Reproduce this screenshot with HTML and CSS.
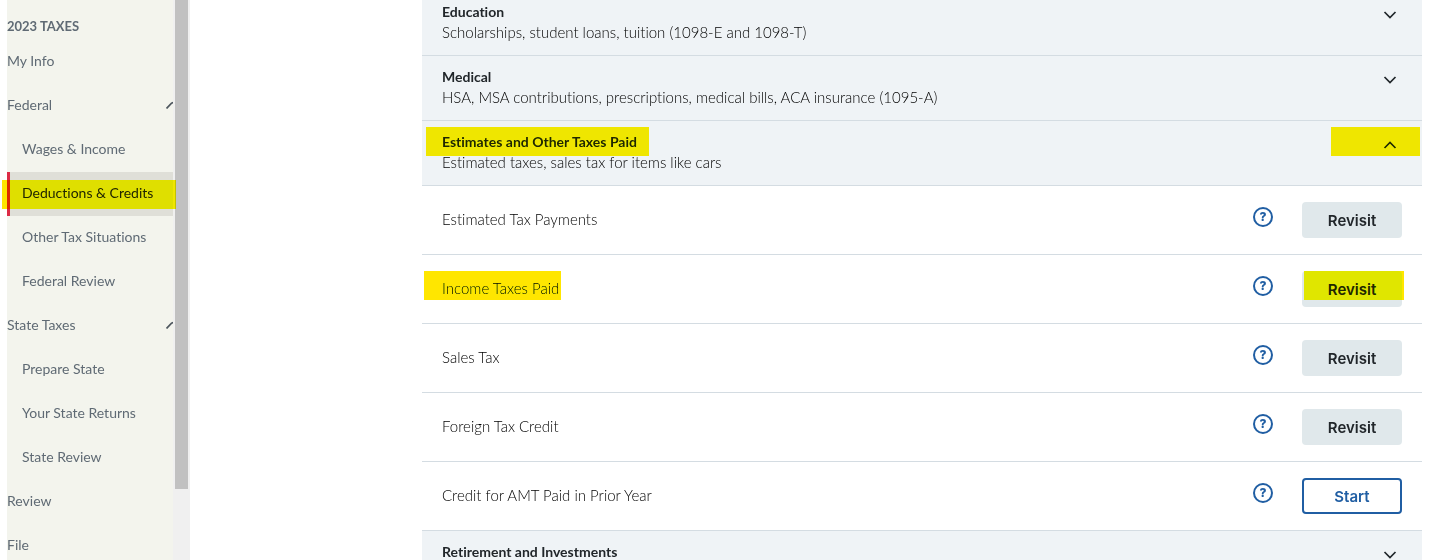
FILE: index.html
```
<!DOCTYPE html>
<html lang="en">
<head>
    <meta charset="UTF-8">
    <meta name="viewport" content="width=device-width, initial-scale=1.0">
    <title>Deductions &amp; Credits</title>
    <link rel="stylesheet" href="styles.css">
</head>
<body>

<!-- Left side - navigation -->
<aside class="sidebar">
    <nav class="side-nav">
        <h2>2023 TAXES</h2>
        <a href="#">My Info</a>
        <a href="#">Federal
            <svg class="nav-arrow" width="7" height="8" viewBox="0 0 7 8"><path d="M0.5 7.5L5.5 2.2L7.5 1.5"/></svg>
        </a>
        <a href="#" class="sub">Wages &amp; Income</a>
        <a href="#" class="sub active mark">Deductions &amp; Credits</a>
        <a href="#" class="sub">Other Tax Situations</a>
        <a href="#" class="sub">Federal Review</a>
        <a href="#">State Taxes
            <svg class="nav-arrow" width="7" height="8" viewBox="0 0 7 8"><path d="M0.5 7.5L5.5 2.2L7.5 1.5"/></svg>
        </a>
        <a href="#" class="sub">Prepare State</a>
        <a href="#" class="sub">Your State Returns</a>
        <a href="#" class="sub">State Review</a>
        <a href="#">Review</a>
        <a href="#">File</a>
    </nav>
    <div class="scrollbar"><div class="thumb"></div></div>
</aside>

<!-- Right side - deduction categories -->
<main class="content">
    <button class="category" aria-expanded="false">
        <span class="category-text">
            <strong>Education</strong>
            <span>Scholarships, student loans, tuition (1098-E and 1098-T)</span>
        </span>
        <span class="chevron"><svg width="24" height="24" viewBox="0 0 24 24"><path d="M6.5 10L12 15.5L17.5 10"/></svg></span>
    </button>
    <button class="category" aria-expanded="false">
        <span class="category-text">
            <strong>Medical</strong>
            <span>HSA, MSA contributions, prescriptions, medical bills, ACA insurance (1095-A)</span>
        </span>
        <span class="chevron"><svg width="24" height="24" viewBox="0 0 24 24"><path d="M6.5 10L12 15.5L17.5 10"/></svg></span>
    </button>
    <button class="category" aria-expanded="true">
        <span class="category-text">
            <strong class="mark mark-title">Estimates and Other Taxes Paid</strong>
            <span>Estimated taxes, sales tax for items like cars</span>
        </span>
        <span class="chevron mark mark-chevron"><svg width="24" height="24" viewBox="0 0 24 24"><path d="M6.5 16L12 10.5L17.5 16"/></svg></span>
    </button>

    <div class="item">
        <span class="item-name">Estimated Tax Payments</span>
        <button class="help" aria-label="Help with Estimated Tax Payments">?</button>
        <button class="btn">Revisit</button>
    </div>
    <div class="item">
        <span class="item-name mark mark-item">Income Taxes Paid</span>
        <button class="help" aria-label="Help with Income Taxes Paid">?</button>
        <button class="btn mark mark-btn">Revisit</button>
    </div>
    <div class="item">
        <span class="item-name">Sales Tax</span>
        <button class="help" aria-label="Help with Sales Tax">?</button>
        <button class="btn">Revisit</button>
    </div>
    <div class="item">
        <span class="item-name">Foreign Tax Credit</span>
        <button class="help" aria-label="Help with Foreign Tax Credit">?</button>
        <button class="btn">Revisit</button>
    </div>
    <div class="item">
        <span class="item-name">Credit for AMT Paid in Prior Year</span>
        <button class="help" aria-label="Help with Credit for AMT Paid in Prior Year">?</button>
        <button class="btn btn-start">Start</button>
    </div>

    <button class="category" aria-expanded="false">
        <span class="category-text">
            <strong>Retirement and Investments</strong>
        </span>
        <span class="chevron"><svg width="24" height="24" viewBox="0 0 24 24"><path d="M6.5 10L12 15.5L17.5 10"/></svg></span>
    </button>
</main>

</body>
</html>
```
FILE: styles.css
```
* {
    box-sizing: border-box;
}

body {
    margin: 0;
    height: 100vh;
    display: flex;
    overflow: hidden;
    background-color: #ffffff;
    font-family: Lato, "Open Sans", sans-serif;
    font-size: 14px;
    font-variant-ligatures: none;
    line-height: 20px;
    color: #21262a;
}

button {
    font-family: inherit;
    font-size: inherit;
    font-variant-ligatures: inherit;
    line-height: inherit;
    color: inherit;
    border: none;
    cursor: pointer;
}

svg {
    display: block;
    fill: none;
    stroke: #21262a;
    stroke-width: 1.7;
}

/* Left side - navigation */
.sidebar {
    display: flex;
    flex-shrink: 0;
    margin-left: 7px;
}

.side-nav {
    width: 166px;
    background-color: #f3f4ed;
}

.side-nav h2 {
    margin: 0;
    padding: 16px 0 4px;
    font-size: 13px;
    font-weight: bold;
    line-height: 20px;
    color: #5f6a74;
}

.side-nav a {
    display: flex;
    align-items: center;
    justify-content: space-between;
    height: 44px;
    padding-bottom: 2px;
    color: #5f6a74;
    text-decoration: none;
}

.side-nav .sub {
    padding-left: 15px;
}

.side-nav .active {
    padding-left: 12px;
    border-left: 3px solid #dc2b45;
    background-color: #dfdfd8;
    color: #21262a;
}

.nav-arrow {
    stroke: #4d565e;
}

.scrollbar {
    width: 17px;
    padding: 0 2px;
    background-color: #f0f0f0;
}

.thumb {
    height: 489px;
    background-color: #c1c1c1;
}

/* Right side - deduction categories */
.content {
    flex: 1;
    margin: -9px 23px 0 232px;
}

.category {
    display: flex;
    align-items: flex-start;
    justify-content: space-between;
    width: 100%;
    min-height: 65px;
    padding: 11px 20px 13px;
    border-bottom: 1px solid #d4dce2;
    background-color: #eff3f6;
    text-align: left;
}

.category-text {
    display: flex;
    flex-direction: column;
    align-items: flex-start;
    font-size: 15px;
    font-weight: 300;
    color: #000000;
}

.category-text strong {
    font-size: 14px;
    font-weight: bold;
    color: #21262a;
}

.item {
    display: flex;
    align-items: center;
    padding: 16px 20px;
    border-bottom: 1px solid #d4dce2;
}

.item-name {
    margin-right: auto;
    padding-bottom: 2px;
    font-size: 15px;
    font-weight: 300;
    color: #000000;
}

.help {
    width: 20px;
    height: 20px;
    margin: 0 29px 6px 0;
    padding: 0;
    border: 2px solid #205ea3;
    border-radius: 50%;
    background-color: transparent;
    color: #205ea3;
    font-family: Inter, sans-serif;
    font-size: 12px;
    font-weight: 800;
    line-height: 16px;
}

.btn {
    width: 100px;
    height: 36px;
    padding: 2px 0 0;
    border-radius: 4px;
    background-color: #e0e8eb;
    font-family: Inter, sans-serif;
    font-size: 15px;
    font-weight: 600;
}

.btn-start {
    border: 2px solid #205ea3;
    background-color: #ffffff;
    color: #205ea3;
}

/* Yellow highlighter strokes */
.mark {
    position: relative;
}

.mark::after {
    content: "";
    position: absolute;
    top: 8px;
    left: -8px;
    right: -3px;
    height: 29px;
    background-color: #ffe600;
    mix-blend-mode: darken;
    pointer-events: none;
}

.mark-title::after {
    top: -5px;
    left: -16px;
    right: -12px;
}

.mark-chevron::after {
    top: -5px;
    left: -47px;
    right: -18px;
}

.mark-item::after {
    top: -7px;
    left: -18px;
    right: -2px;
}

.mark-btn::after {
    top: 0;
    left: 2px;
    right: -2px;
}
```
